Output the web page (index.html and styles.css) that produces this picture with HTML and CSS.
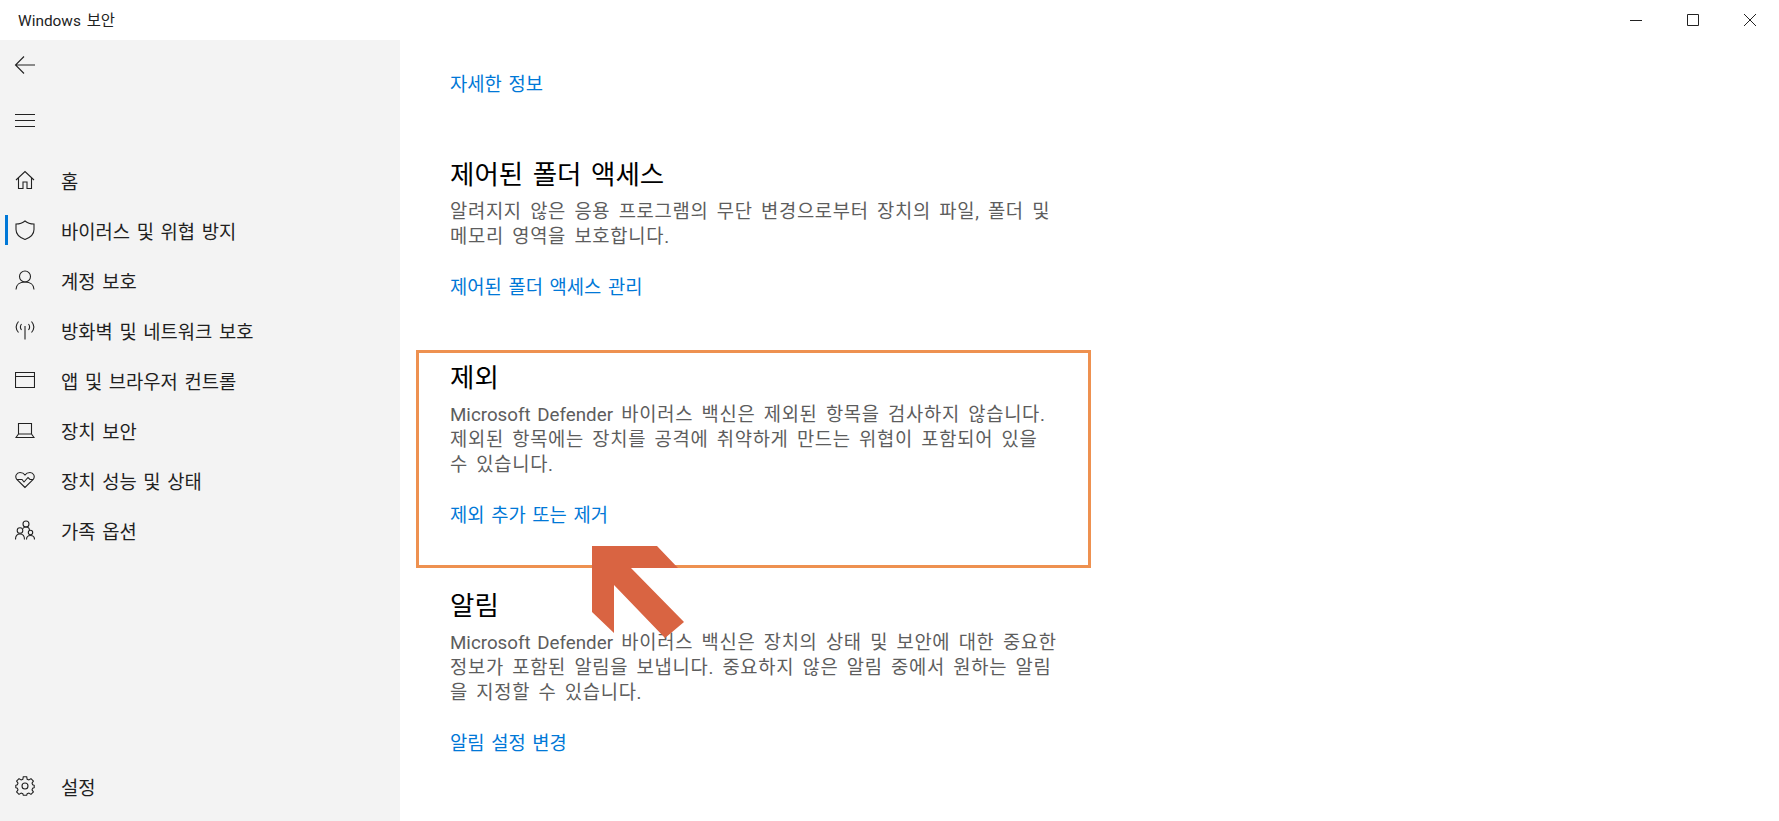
FILE: index.html
```html
<!DOCTYPE html>
<html lang="ko">
<head>
  <meta charset="UTF-8" />
  <title>Windows 보안</title>
  <link rel="stylesheet" href="styles.css">
</head>
<body>

  <div class="title-bar">
    <span class="title-text">Windows 보안</span>
    <div class="window-buttons">
      <div class="window-button">
        <svg width="14" height="14" viewBox="0 0 14 14"><path d="M1 7.500H13" /></svg>
      </div>
      <div class="window-button">
        <svg width="14" height="14" viewBox="0 0 14 14"><path d="M1.500 1.500H12.500V12.500H1.500Z" /></svg>
      </div>
      <div class="window-button">
        <svg width="14" height="14" viewBox="0 0 14 14"><path d="M1 1L13 13M13 1L1 13" /></svg>
      </div>
    </div>
  </div>

  <div class="app">
    <nav class="sidebar">
      <div class="tool-button">
        <svg class="icon" width="22" height="22" viewBox="0 0 22 22"><path d="M1.500 11H21M10 2.500L1.500 11L10 19.500" /></svg>
      </div>
      <div class="tool-button">
        <svg class="icon" width="22" height="22" viewBox="0 0 22 22"><path d="M1 5.500H21M1 11.500H21M1 17.500H21" /></svg>
      </div>

      <ul class="nav-list">
        <li class="nav-item">
          <svg class="icon" width="20" height="20" viewBox="0 0 20 20"><path d="M1 10L10 1.500L19 10M3.500 8V18.500H8V12H12V18.500H16.500V8" /></svg>
          <span>홈</span>
        </li>
        <li class="nav-item active">
          <svg class="icon" width="20" height="20" viewBox="0 0 20 20"><path d="M10 1C7.500 3.200 4.500 4 1 4V9.500C1 14 4.500 17.500 10 19.500C15.500 17.500 19 14 19 9.500V4C15.500 4 12.500 3.200 10 1Z" /></svg>
          <span>바이러스 및 위협 방지</span>
        </li>
        <li class="nav-item">
          <svg class="icon" width="20" height="20" viewBox="0 0 20 20"><circle cx="10" cy="6.500" r="5.500" /><path d="M1 19.500C1 14.500 5 12 10 12C15 12 19 14.500 19 19.500" /></svg>
          <span>계정 보호</span>
        </li>
        <li class="nav-item">
          <svg class="icon" width="20" height="20" viewBox="0 0 20 20"><path d="M10 6V19.500M3.500 1.500C0.500 5 0.500 9 3.500 12.500M16.500 1.500C19.500 5 19.500 9 16.500 12.500M6.500 4C5 6 5 8 6.500 10M13.500 4C15 6 15 8 13.500 10" /></svg>
          <span>방화벽 및 네트워크 보호</span>
        </li>
        <li class="nav-item">
          <svg class="icon" width="20" height="20" viewBox="0 0 20 20"><path d="M0.500 2.500H19.500V17.500H0.500ZM0.500 6.500H19.500" /></svg>
          <span>앱 및 브라우저 컨트롤</span>
        </li>
        <li class="nav-item">
          <svg class="icon" width="20" height="20" viewBox="0 0 20 20"><path d="M3.500 3.500H16.500V14H3.500ZM3.500 14L1 17.500H19L16.500 14" /></svg>
          <span>장치 보안</span>
        </li>
        <li class="nav-item">
          <svg class="icon" width="20" height="20" viewBox="0 0 20 20"><path d="M10 17.500L1.800 9.500C-0.500 6.500 1.500 2.500 5 2.500C7 2.500 9 3.500 10 5C11 3.500 13 2.500 15 2.500C18.500 2.500 20.500 6.500 18.200 9.500ZM2 9.500H7L9 12L13 7.500L15 9.500H18" /></svg>
          <span>장치 성능 및 상태</span>
        </li>
        <li class="nav-item">
          <svg class="icon" width="20" height="20" viewBox="0 0 20 20"><circle cx="11" cy="4" r="3" /><circle cx="5" cy="10.500" r="2.800" /><circle cx="15.500" cy="12.500" r="2.200" /><path d="M0.500 19.500C0.500 16 2.500 14 5 14C7.500 14 9.500 16 9.500 19.500M11.500 19.500C11.500 17 13 15.500 15.500 15.500C18 15.500 19.500 17 19.500 19.500M8 8.500C8.500 7.500 9.500 7 11 7C13 7 14.500 8.500 14.500 10.500" /></svg>
          <span>가족 옵션</span>
        </li>
      </ul>

      <div class="nav-item settings">
        <svg class="icon" width="20" height="20" viewBox="0 0 20 20"><circle cx="10" cy="10" r="3" /><path d="M8.300 0.800H11.700L12.200 3.300L13.900 4L16 2.600L18.400 5L17 7.100L17.700 8.800L19.200 9.300V11.700L17.700 12.200L17 13.900L18.400 16L16 18.400L13.900 17L12.200 17.700L11.700 19.200H8.300L7.800 17.700L6.100 17L4 18.400L1.600 16L3 13.900L2.300 12.200L0.800 11.700V9.300L2.300 8.800L3 7.100L1.600 5L4 2.600L6.100 4L7.800 3.300Z" /></svg>
        <span>설정</span>
      </div>
    </nav>

    <main class="content">
      <a class="link" href="#">자세한 정보</a>

      <section class="block">
        <h2>제어된 폴더 액세스</h2>
        <p>알려지지 않은 응용 프로그램의 무단 변경으로부터 장치의 파일, 폴더 및 메모리 영역을 보호합니다.</p>
        <a class="link" href="#">제어된 폴더 액세스 관리</a>
      </section>

      <section class="block">
        <h2>제외</h2>
        <p><span class="brand">Microsoft Defender</span><span> 바이러스 백신은 제외된 항목을 검사하지 않습니다.</span> 제외된 항목에는 장치를 공격에 취약하게 만드는 위협이 포함되어 있을 수 있습니다.</p>
        <a class="link" href="#">제외 추가 또는 제거</a>
      </section>

      <section class="block">
        <h2>알림</h2>
        <p><span class="brand">Microsoft Defender</span><span> 바이러스 백신은 장치의 상태 및 보안에 대한 중요한</span> 정보가 포함된 알림을 보냅니다. 중요하지 않은 알림 중에서 원하는 알림을 지정할 수 있습니다.</p>
        <a class="link" href="#">알림 설정 변경</a>
      </section>
    </main>
  </div>

  <!-- annotation drawn over the screenshot -->
  <div class="highlight-box"></div>
  <svg class="arrow" width="100" height="100" viewBox="0 0 100 100">
    <polygon points="2,1 67,1 88,23 41,23 94,77 75,93 24,40 24,88 2,67" />
  </svg>

</body>
</html>
```

FILE: styles.css
```css
* {
  box-sizing: border-box;
}

html, body {
  height: 100%;
}

body {
  margin: 0;
  height: 821px;
  overflow: hidden;
  background: #fff;
  color: #000;
  font-family: Roboto, "Noto Sans CJK KR", sans-serif;
  word-spacing: 2px;
  position: relative;
}

.title-bar {
  display: flex;
  justify-content: space-between;
  align-items: center;
  height: 40px;
  padding-left: 18px;
}

.title-text {
  margin-top: -2px;
  font-size: 15.4px;
  color: #222;
}

.window-buttons {
  display: flex;
  margin-right: 1px;
}

.window-button {
  display: flex;
  justify-content: center;
  align-items: center;
  width: 57px;
  height: 40px;
}

.window-button svg {
  fill: none;
  stroke: #222;
  stroke-width: 1;
}

.app {
  display: flex;
  height: 781px;
}

.sidebar {
  display: flex;
  flex-direction: column;
  width: 400px;
  background: #f3f3f3;
}

.icon {
  flex: none;
  fill: none;
  stroke: #222;
  stroke-width: 1.1;
}

.tool-button {
  display: flex;
  align-items: center;
  height: 55px;
  padding-left: 14px;
  margin-top: -3px;
}

.tool-button + .tool-button {
  margin-top: 0;
}

.nav-list {
  list-style: none;
  margin: 8px 0 0;
  padding: 0;
}

.nav-item {
  display: flex;
  align-items: center;
  gap: 26px;
  height: 50px;
  padding-left: 15px;
  font-size: 18.75px;
  color: #1f1f1f;
  position: relative;
}

.nav-item.active::before {
  content: "";
  position: absolute;
  left: 5px;
  top: 10px;
  width: 3px;
  height: 30px;
  background: #0078d7;
}

.settings {
  margin-top: auto;
  margin-bottom: 10px;
}

.content {
  flex: 1;
  padding: 33px 0 0 50px;
}

.link {
  display: block;
  width: fit-content;
  font-size: 18.75px;
  line-height: 25px;
  color: #0078d7;
  text-decoration: none;
}

.block {
  margin-top: 59px;
}

.block h2 {
  margin: 0 0 8px;
  font-size: 26.5px;
  font-weight: 400;
  line-height: 35px;
  word-spacing: 3px;
  color: #000;
}

.block p {
  width: 609px;
  margin: 0 0 26px;
  font-size: 18.75px;
  line-height: 25px;
  letter-spacing: 0.7px;
  word-spacing: 3px;
  color: #5d5d5d;
}

.brand {
  letter-spacing: 0;
  word-spacing: 2px;
}

.highlight-box {
  position: absolute;
  left: 416px;
  top: 350px;
  width: 675px;
  height: 218px;
  border: 3px solid #ee9150;
}

.arrow {
  position: absolute;
  left: 590px;
  top: 545px;
  overflow: visible;
}

.arrow polygon {
  fill: #d96442;
}
```
